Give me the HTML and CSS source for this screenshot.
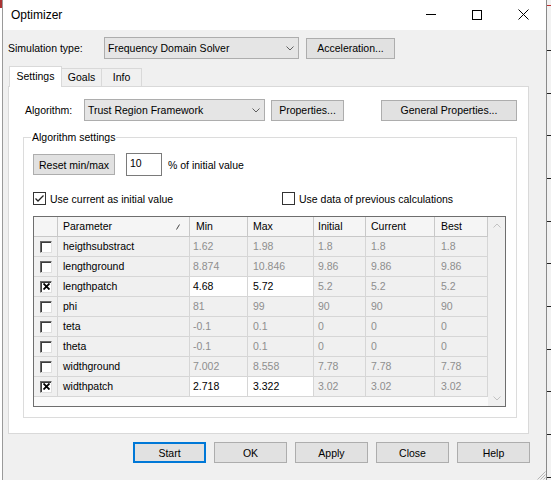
FILE: index.html
```html
<!DOCTYPE html>
<html>
<head>
<meta charset="utf-8">
<title>Optimizer</title>
<link rel="stylesheet" href="styles.css">
</head>
<body>
<div class="screen">
  <div class="edge-left"></div>
  <div class="window">
    <div class="titlebar">
      <span class="title">Optimizer</span>
      <div class="caps">
        <span class="cap"><svg width="10" height="10" viewBox="0 0 10 10"><path d="M0 4.5H10" stroke="#000" stroke-width="1" fill="none"/></svg></span>
        <span class="cap"><svg width="10" height="10" viewBox="0 0 10 10"><rect x="0.5" y="0.5" width="9" height="9" stroke="#000" stroke-width="1" fill="none"/></svg></span>
        <span class="cap"><svg width="11" height="11" viewBox="0 0 11 11"><path d="M0.5 0.5L10.5 10.5M10.5 0.5L0.5 10.5" stroke="#000" stroke-width="1" fill="none"/></svg></span>
      </div>
    </div>

    <div class="sim-row">
      <span class="sim-label">Simulation type:</span>
      <div class="combo sim-combo">
        <span class="combo-text">Frequency Domain Solver</span>
        <span class="combo-arrow"><svg width="8" height="5" viewBox="0 0 8 5"><path d="M0.5 0.5L4 4L7.5 0.5" stroke="#5f5f5f" stroke-width="1" fill="none"/></svg></span>
      </div>
      <button class="btn accel">Acceleration...</button>
    </div>

    <div class="tabs">
      <div class="tab active">Settings</div>
      <div class="tab tab-goals">Goals</div>
      <div class="tab tab-info">Info</div>
    </div>

    <div class="panel">
      <div class="algo-row">
        <span class="algo-label">Algorithm:</span>
        <div class="combo algo-combo">
          <span class="combo-text">Trust Region Framework</span>
          <span class="combo-arrow"><svg width="8" height="5" viewBox="0 0 8 5"><path d="M0.5 0.5L4 4L7.5 0.5" stroke="#5f5f5f" stroke-width="1" fill="none"/></svg></span>
        </div>
        <button class="btn props">Properties...</button>
        <button class="btn gen-props">General Properties...</button>
      </div>

      <div class="group">
        <div class="group-title">Algorithm settings</div>

        <div class="reset-row">
          <button class="btn reset">Reset min/max</button>
          <div class="num">10</div>
          <span class="pct">% of initial value</span>
        </div>

        <div class="check-row">
          <label class="chk chk-first">
            <span class="box"><svg width="11" height="11" viewBox="0 0 11 11"><path d="M1.5 5.5L4 8L9.5 2.5" stroke="#222" stroke-width="1.3" fill="none"/></svg></span>
            <span>Use current as initial value</span>
          </label>
          <label class="chk">
            <span class="box"></span>
            <span>Use data of previous calculations</span>
          </label>
        </div>

        <div class="grid">
          <div class="grid-table">
            <div class="h"></div>
            <div class="h h-param"><span>Parameter</span><svg width="4" height="6" viewBox="0 0 4 6"><path d="M0.5 5.5L3.5 0.5" stroke="#444" stroke-width="1" fill="none"/></svg></div>
            <div class="h">Min</div>
            <div class="h">Max</div>
            <div class="h">Initial</div>
            <div class="h">Current</div>
            <div class="h">Best</div>

            <div class="c cb"><span class="gbox"></span></div>
            <div class="c name">heigthsubstract</div>
            <div class="c">1.62</div><div class="c">1.98</div>
            <div class="c">1.8</div><div class="c">1.8</div><div class="c">1.8</div>

            <div class="c cb"><span class="gbox"></span></div>
            <div class="c name">lengthground</div>
            <div class="c">8.874</div><div class="c">10.846</div>
            <div class="c">9.86</div><div class="c">9.86</div><div class="c">9.86</div>

            <div class="c cb"><span class="gbox"><svg width="7" height="7" viewBox="0 0 7 7"><path d="M0.5 0.5L6.5 6.5M6.5 0.5L0.5 6.5" stroke="#000" stroke-width="1.8" fill="none"/></svg></span></div>
            <div class="c name">lengthpatch</div>
            <div class="c edit">4.68</div><div class="c edit">5.72</div>
            <div class="c">5.2</div><div class="c">5.2</div><div class="c">5.2</div>

            <div class="c cb"><span class="gbox"></span></div>
            <div class="c name">phi</div>
            <div class="c">81</div><div class="c">99</div>
            <div class="c">90</div><div class="c">90</div><div class="c">90</div>

            <div class="c cb"><span class="gbox"></span></div>
            <div class="c name">teta</div>
            <div class="c">-0.1</div><div class="c">0.1</div>
            <div class="c">0</div><div class="c">0</div><div class="c">0</div>

            <div class="c cb"><span class="gbox"></span></div>
            <div class="c name">theta</div>
            <div class="c">-0.1</div><div class="c">0.1</div>
            <div class="c">0</div><div class="c">0</div><div class="c">0</div>

            <div class="c cb"><span class="gbox"></span></div>
            <div class="c name">widthground</div>
            <div class="c">7.002</div><div class="c">8.558</div>
            <div class="c">7.78</div><div class="c">7.78</div><div class="c">7.78</div>

            <div class="c cb"><span class="gbox"><svg width="7" height="7" viewBox="0 0 7 7"><path d="M0.5 0.5L6.5 6.5M6.5 0.5L0.5 6.5" stroke="#000" stroke-width="1.8" fill="none"/></svg></span></div>
            <div class="c name">widthpatch</div>
            <div class="c edit">2.718</div><div class="c edit">3.322</div>
            <div class="c">3.02</div><div class="c">3.02</div><div class="c">3.02</div>
          </div>
          <div class="scroll">
            <svg width="8" height="5" viewBox="0 0 8 5"><path d="M0.5 4.5L4 1L7.5 4.5" stroke="#c2c2c2" stroke-width="1" fill="none"/></svg>
            <svg width="8" height="5" viewBox="0 0 8 5"><path d="M0.5 0.5L4 4L7.5 0.5" stroke="#c2c2c2" stroke-width="1" fill="none"/></svg>
          </div>
        </div>
      </div>
    </div>

    <div class="footer">
      <button class="btn fbtn start">Start</button>
      <button class="btn fbtn">OK</button>
      <button class="btn fbtn">Apply</button>
      <button class="btn fbtn">Close</button>
      <button class="btn fbtn">Help</button>
    </div>

    <div class="grip"><svg width="10" height="10" viewBox="0 0 10 10"><path d="M9.5 1.5L1.5 9.5M9.5 4.5L4.5 9.5M9.5 7.5L7.5 9.5" stroke="#b5b5b5" stroke-width="1" fill="none"/></svg></div>
  </div>
  <div class="edge-right"></div>
</div>
</body>
</html>
```

FILE: styles.css
```css
* { box-sizing: border-box; }
html, body { margin: 0; padding: 0; }
body {
  width: 551px;
  height: 480px;
  overflow: hidden;
  background: #fff;
  font-family: "Liberation Sans", Arial, sans-serif;
  font-size: 10.5px;
  color: #000;
}
.screen { display: flex; height: 480px; }
.edge-left {
  width: 2px;
  background: linear-gradient(#a33 0 8px, #fff 8px);
}
.edge-right {
  width: 4px;
  background:
    linear-gradient(#b33, #b33) 0 5px / 100% 1px no-repeat,
    repeating-linear-gradient(#222 0 1px, transparent 1px 42.67px) 0 50px / 100% 100% no-repeat,
    #f2f2f2;
}
.window {
  width: 545px;
  border-left: 1px solid #9a9a9a;
  border-right: 1px solid #8a8a8a;
  background: #f0f0f0;
  display: flex;
  flex-direction: column;
}

/* title bar */
.titlebar { height: 30px; background: #fff; display: flex; align-items: flex-start; }
.title { flex: 1; padding-left: 8px; font-size: 12px; line-height: 30px; }
.caps { display: flex; }
.cap { width: 46px; height: 29px; display: flex; align-items: center; justify-content: center; }

/* controls */
.btn {
  font: inherit;
  color: #000;
  margin: 0;
  padding: 0;
  height: 21px;
  border: 1px solid #adadad;
  background: #e1e1e1;
  white-space: nowrap;
}
.combo {
  height: 22px;
  border: 1px solid #adadad;
  background: #e5e5e5;
  display: flex;
  align-items: center;
}
.combo-text { flex: 1; padding-left: 3px; white-space: nowrap; }
.combo-arrow { width: 17px; display: flex; justify-content: center; }

.sim-row { display: flex; align-items: center; height: 22px; margin: 7px 0 0 5px; }
.sim-label { width: 96px; }
.sim-combo { width: 195px; }
.accel { width: 89px; margin-left: 7px; }

/* tabs */
.tabs {
  display: flex;
  align-items: flex-end;
  height: 20px;
  margin: 7px 0 0 6px;
  position: relative;
  z-index: 1;
}
.tab {
  height: 18px;
  border: 1px solid #d9d9d9;
  border-left: none;
  border-bottom: none;
  background: #f0f0f0;
  text-align: center;
  line-height: 17px;
  width: 40px;
}
.tab.active {
  width: 53px;
  height: 21px;
  margin-bottom: -1px;
  border-left: 1px solid #d9d9d9;
  background: #fff;
  line-height: 19px;
}

/* panel */
.panel {
  width: 521px;
  margin-left: 5px;
  border: 1px solid #d9d9d9;
  background: #fff;
  padding: 12px 0 15px 14px;
}
.algo-row { display: flex; align-items: center; height: 22px; padding-left: 2px; }
.algo-label { width: 59px; }
.algo-combo { width: 181px; }
.props { width: 73px; margin-left: 6px; }
.gen-props { width: 136px; margin-left: 37px; }

/* group box */
.group {
  width: 494px;
  margin-top: 16px;
  border: 1px solid #dcdcdc;
  padding: 0 10px 10px 9px;
}
.group-title {
  width: fit-content;
  margin: -7px 0 0 -2px;
  padding: 0 1px;
  line-height: 13px;
  background: #fff;
}
.reset-row { display: flex; align-items: center; height: 23px; margin-top: 9px; }
.reset { width: 82px; }
.num {
  width: 36px;
  height: 23px;
  margin-left: 11px;
  border: 1px solid #7a7a7a;
  background: #fff;
  padding: 3px 0 0 3px;
  line-height: 13px;
}
.pct { margin-left: 6px; }

.check-row { display: flex; align-items: center; height: 13px; margin-top: 16px; }
.chk { display: flex; align-items: center; gap: 4px; }
.chk-first { width: 249px; }
.box {
  width: 13px;
  height: 13px;
  border: 1px solid #333;
  background: #fff;
  display: flex;
  align-items: center;
  justify-content: center;
}

/* data grid */
.grid {
  margin-top: 11px;
  width: 473px;
  height: 191px;
  border: 1px solid #6e6e6e;
  display: flex;
  background: #fafafa;
}
.grid-table {
  width: 454px;
  display: grid;
  grid-template-columns: 24px 132px 58px 66px 52px 69px 53px;
  grid-auto-rows: 20px;
  align-content: start;
}
.grid-table > div {
  border-right: 1px solid #d6d6d6;
  border-bottom: 1px solid #d6d6d6;
  line-height: 19px;
  white-space: nowrap;
  overflow: hidden;
}
.h { background: #f5f5f5; color: #000; padding-left: 5px; }
.grid-table > .h { border-right-color: #c8c8c8; border-bottom-color: #c8c8c8; }
.h-param { display: flex; align-items: center; justify-content: space-between; padding-right: 9px; }
.c { background: #f0f0f0; color: #8e8e8e; padding-left: 4px; }
.grid-table > div:nth-child(7n+3) { padding-left: 3px; }
.grid-table > div:nth-child(7n+4) { padding-left: 5px; }
.grid-table > div:nth-child(7n+5) { padding-left: 4px; }
.grid-table > div:nth-child(7n+6) { padding-left: 5px; }
.grid-table > div:nth-child(7n) { padding-left: 6px; }
.grid-table > .h:nth-child(3) { padding-left: 6px; }
.c.name { color: #000; padding-left: 5px; }
.c.edit { background: #fff; color: #000; }
.c.cb { display: flex; align-items: center; padding-left: 6px; }
.gbox {
  width: 12px;
  height: 12px;
  border: 1px solid;
  border-color: #6a6a6a #e0e0e0 #e0e0e0 #6a6a6a;
  box-shadow: inset 1px 1px 0 #3c3c3c;
  background: #fff;
  display: flex;
  align-items: center;
  justify-content: center;
}
.scroll {
  width: 17px;
  background: #f0f0f0;
  display: flex;
  flex-direction: column;
  justify-content: space-between;
  align-items: center;
  padding: 6px 0 5px;
}

/* footer */
.footer {
  display: flex;
  justify-content: flex-end;
  gap: 8px;
  margin-top: 8px;
  padding-right: 16px;
}
.fbtn { width: 73px; }
.fbtn.start { border: 2px solid #0078d7; }

.grip {
  margin-top: auto;
  align-self: flex-end;
  width: 10px;
  height: 10px;
  display: flex;
}
```
